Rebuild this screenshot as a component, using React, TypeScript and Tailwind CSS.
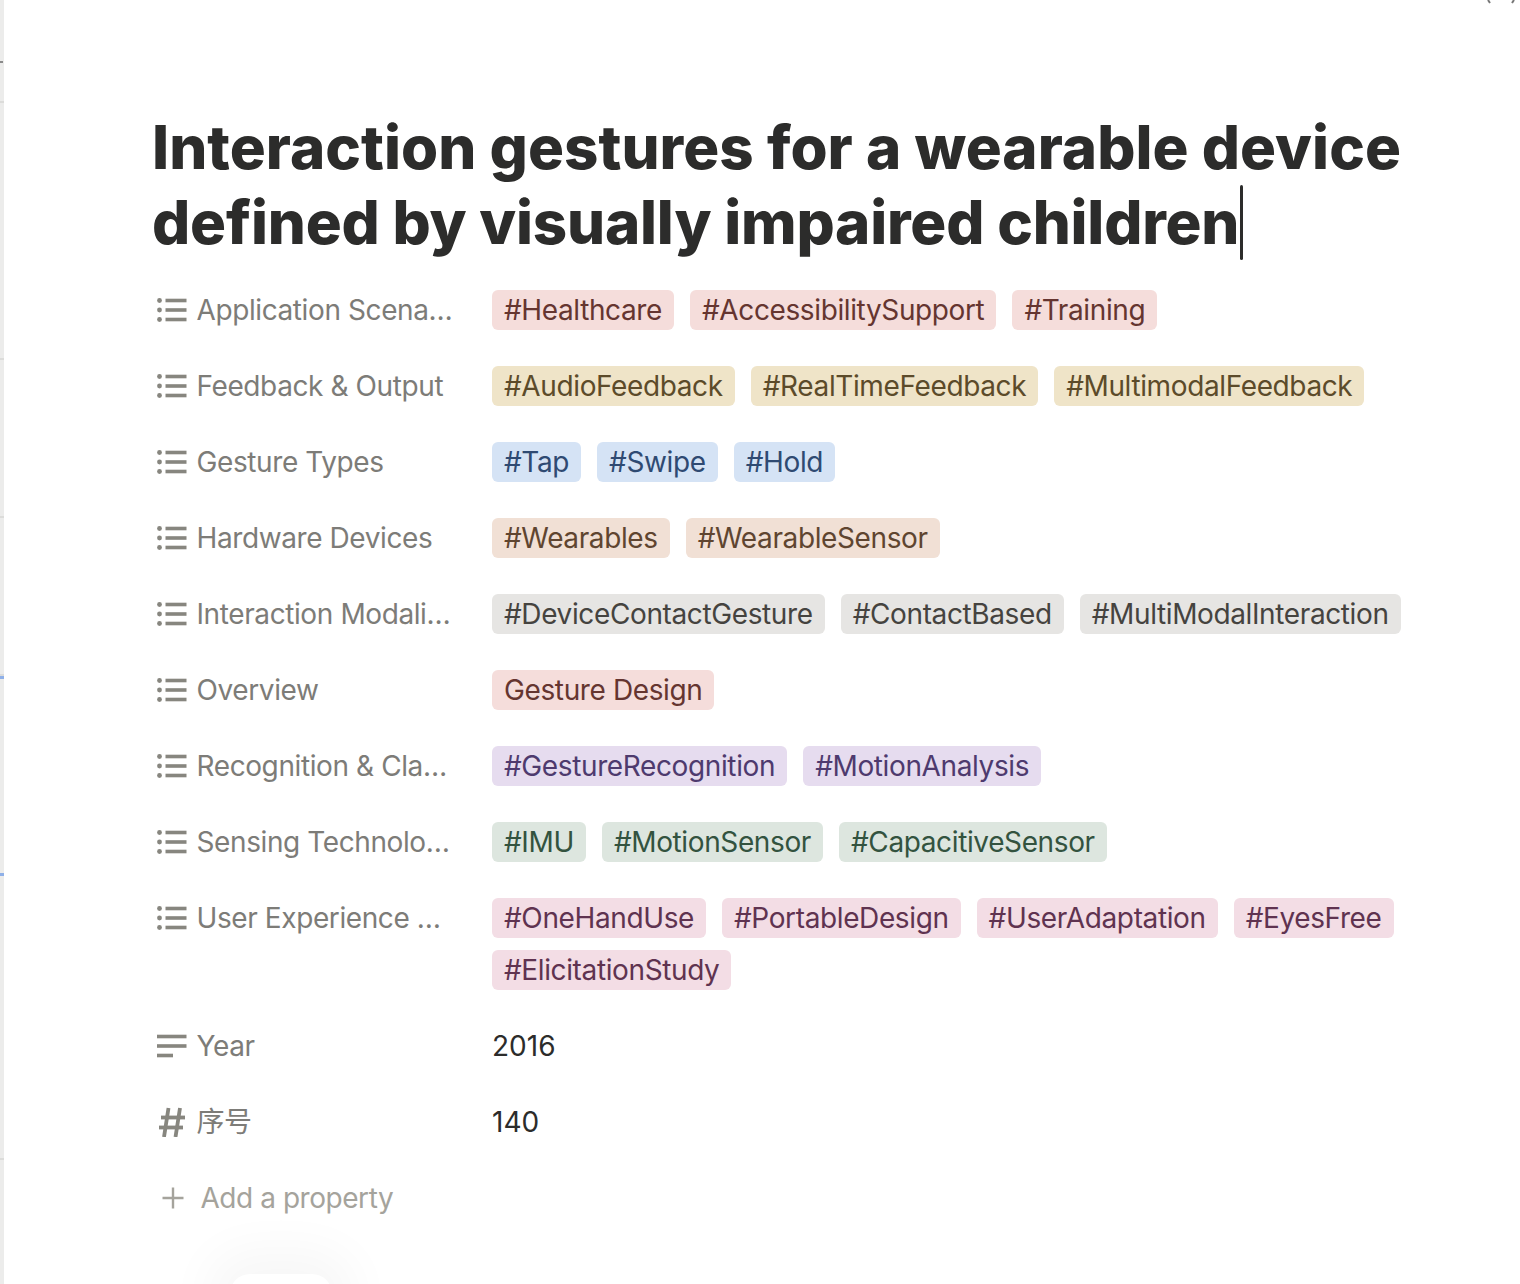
import React from 'react';

type TagRow = {
  label: string;
  tone: string;
  tags: string[];
};

// tag colours follow the Notion select palette
const rows: TagRow[] = [
  { label: 'Application Scena…', tone: 'bg-[#f5dddb] text-[#653530]', tags: ['#Healthcare', '#AccessibilitySupport', '#Training'] },
  { label: 'Feedback & Output', tone: 'bg-[#efe4c8] text-[#5c4b2a]', tags: ['#AudioFeedback', '#RealTimeFeedback', '#MultimodalFeedback'] },
  { label: 'Gesture Types', tone: 'bg-[#d5e3f5] text-[#2f4a72]', tags: ['#Tap', '#Swipe', '#Hold'] },
  { label: 'Hardware Devices', tone: 'bg-[#f1e0d5] text-[#5f4530]', tags: ['#Wearables', '#WearableSensor'] },
  { label: 'Interaction Modali…', tone: 'bg-[#e6e5e3] text-[#45433f]', tags: ['#DeviceContactGesture', '#ContactBased', '#MultiModalInteraction'] },
  { label: 'Overview', tone: 'bg-[#f5dddb] text-[#653530]', tags: ['Gesture Design'] },
  { label: 'Recognition & Cla…', tone: 'bg-[#e6dcef] text-[#4e3a6e]', tags: ['#GestureRecognition', '#MotionAnalysis'] },
  { label: 'Sensing Technolo…', tone: 'bg-[#dde6df] text-[#33533f]', tags: ['#IMU', '#MotionSensor', '#CapacitiveSensor'] },
  { label: 'User Experience …', tone: 'bg-[#f3dde5] text-[#5f3350]', tags: ['#OneHandUse', '#PortableDesign', '#UserAdaptation', '#EyesFree', '#ElicitationStudy'] },
];

function ListIcon() {
  return (
    <svg width="30" height="24" viewBox="0 0 30 24" className="shrink-0 text-[#87867f]" fill="currentColor">
      <circle cx="2.5" cy="2.5" r="2.4" />
      <circle cx="2.5" cy="12" r="2.4" />
      <circle cx="2.5" cy="21.5" r="2.4" />
      <rect x="8.5" y="0.7" width="21" height="3.6" />
      <rect x="8.5" y="10.2" width="21" height="3.6" />
      <rect x="8.5" y="19.7" width="21" height="3.6" />
    </svg>
  );
}

function TextIcon() {
  return (
    <svg width="30" height="24" viewBox="0 0 30 24" className="shrink-0 text-[#87867f]" fill="currentColor">
      <rect x="0" y="0.7" width="29.5" height="3.6" />
      <rect x="0" y="10.2" width="29.5" height="3.6" />
      <rect x="0" y="19.7" width="16" height="3.6" />
    </svg>
  );
}

function NumberIcon() {
  return (
    <svg width="30" height="30" viewBox="0 0 30 30" className="shrink-0 text-[#87867f]" fill="none" stroke="currentColor" strokeWidth="3.8">
      <path d="M11.5 1 L7 30" />
      <path d="M23 1 L18.5 30" />
      <path d="M4 10.5 H28" />
      <path d="M2 20.5 H26" />
    </svg>
  );
}

function PropertyLabel({ icon, label }: { icon: React.ReactNode; label: string }) {
  return (
    <div className="w-[340px] shrink-0 h-10 pl-[5px] flex items-center gap-[9.5px] text-[28px] tracking-[-0.4px] text-[#7d7c78]">
      {icon}
      <span className="whitespace-nowrap">{label}</span>
    </div>
  );
}

export default function App() {
  return (
    <div
      className="relative w-[1520px] h-[1284px] overflow-hidden bg-white"
      style={{ fontFamily: 'Inter, "Noto Sans CJK SC", sans-serif' }}
    >
      {/* sliver of the neighbouring window */}
      <div className="absolute left-0 top-0 h-full w-[4px] bg-[#ececeb]">
        <div className="absolute left-0 top-[61px] h-[2px] w-[3px] bg-[#8a8a8a]" />
        <div className="absolute left-0 top-[101px] h-[2px] w-[4px] bg-[#dcdcda]" />
        <div className="absolute left-0 top-[358px] h-[2px] w-[4px] bg-[#dcdcda]" />
        <div className="absolute left-0 top-[516px] h-[2px] w-[4px] bg-[#dcdcda]" />
        <div className="absolute left-0 top-[674px] h-[2px] w-[4px] bg-[#dcdcda]" />
        <div className="absolute left-0 top-[676px] h-[3px] w-[4px] bg-[#8fb0e8]" />
        <div className="absolute left-0 top-[873px] h-[3px] w-[4px] bg-[#8fb0e8]" />
        <div className="absolute left-0 top-[1158px] h-[2px] w-[4px] bg-[#dcdcda]" />
      </div>

      {/* corner of a collapsed control, cut off by the top edge */}
      <svg width="28" height="4" viewBox="0 0 28 4" className="absolute right-[5px] top-0 text-[#777]" fill="none" stroke="currentColor" strokeWidth="2">
        <path d="M1 0 L3 3 M25 3 L27 0" />
      </svg>

      <div className="pl-[152px] pr-[80px] pt-[110px]">
        <h1 className="w-[1320px] text-[60px] leading-[75px] font-extrabold text-[#2c2c2b]">
          <span className="tracking-[0.05px]">Interaction gestures for a wearable device</span>
          <br />
          <span className="tracking-[-0.2px]">defined by visually impaired children</span>
          <span className="inline-block w-[3px] h-[75px] ml-[1px] align-top bg-[#2c2c2b] rounded-full" />
        </h1>

        <div className="mt-[30px] flex flex-col gap-[36px]">
          {rows.map((row) => (
            <div key={row.label} className="flex items-start">
              <PropertyLabel icon={<ListIcon />} label={row.label} />
              <div className="flex flex-wrap gap-x-4 gap-y-3 w-[930px]">
                {row.tags.map((tag) => (
                  <span key={tag} className={`h-10 px-3 rounded-md flex items-center text-[28px] tracking-[-0.38px] whitespace-nowrap ${row.tone}`}>
                    {tag}
                  </span>
                ))}
              </div>
            </div>
          ))}

          <div className="flex items-start">
            <PropertyLabel icon={<TextIcon />} label="Year" />
            <div className="h-10 flex items-center text-[28px] text-[#2c2c2b]">2016</div>
          </div>

          <div className="flex items-start">
            <PropertyLabel icon={<NumberIcon />} label="序号" />
            <div className="h-10 flex items-center text-[28px] text-[#2c2c2b]">140</div>
          </div>

          <div className="h-10 pl-[9px] flex items-center gap-[15.5px] text-[28px] tracking-[-0.45px] text-[#a5a39c]">
            <svg width="24" height="24" viewBox="0 0 24 24" fill="none" stroke="currentColor" strokeWidth="2.4" className="shrink-0">
              <path d="M12 1.5 V22.5 M1.5 12 H22.5" />
            </svg>
            <span>Add a property</span>
          </div>
        </div>
      </div>

      {/* floating pill peeking in at the bottom */}
      <div className="absolute left-[230px] top-[1274px] w-[102px] h-[40px] rounded-[20px] bg-white shadow-[0_0_50px_24px_rgba(0,0,0,0.035)]" />
    </div>
  );
}
